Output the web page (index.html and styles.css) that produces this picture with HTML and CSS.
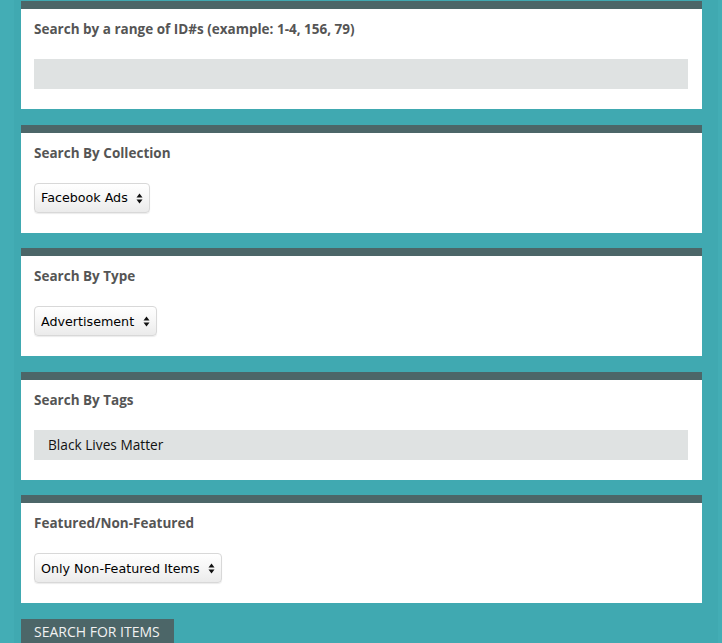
FILE: index.html
```html
<!DOCTYPE html>
<html>
<head>
<meta charset="utf-8">
<link rel="stylesheet" href="styles.css">
</head>
<body>
<div class="wrap">
  <div class="panel">
    <div class="label">Search by a range of ID#s (example: 1-4, 156, 79)</div>
    <input class="field" type="text" value="">
  </div>
  <div class="panel">
    <div class="label">Search By Collection</div>
    <span class="sel"><select><option>Facebook Ads</option></select><svg class="arr" width="7" height="11" viewBox="0 0 7 11"><path d="M3.5 0.5L6.5 4.5H0.5Z M3.5 10.5L6.5 6.5H0.5Z" fill="#111"/></svg></span>
  </div>
  <div class="panel">
    <div class="label">Search By Type</div>
    <span class="sel"><select><option>Advertisement</option></select><svg class="arr" width="7" height="11" viewBox="0 0 7 11"><path d="M3.5 0.5L6.5 4.5H0.5Z M3.5 10.5L6.5 6.5H0.5Z" fill="#111"/></svg></span>
  </div>
  <div class="panel">
    <div class="label">Search By Tags</div>
    <input class="field tags" type="text" value="Black Lives Matter">
  </div>
  <div class="panel">
    <div class="label">Featured/Non-Featured</div>
    <span class="sel"><select><option>Only Non-Featured Items</option></select><svg class="arr" width="7" height="11" viewBox="0 0 7 11"><path d="M3.5 0.5L6.5 4.5H0.5Z M3.5 10.5L6.5 6.5H0.5Z" fill="#111"/></svg></span>
  </div>
  <button class="submit">SEARCH FOR ITEMS</button>
</div>
</body>
</html>
```
FILE: styles.css
```css
html, body {
  margin: 0;
  padding: 0;
  background: #43adb5;
  height: 100%;
  overflow: hidden;
}
body {
  font-family: "Open Sans", "Noto Sans", sans-serif;
}
.wrap {
  margin-left: 14px;
  width: 704px;
  padding: 1px 16px 0 7px;
  box-sizing: border-box;
  background: #40a9b1;
  min-height: 100%;
  display: flex;
  flex-direction: column;
  align-items: flex-start;
}
.panel {
  align-self: stretch;
  background: #fff;
  border-top: 8px solid #4c6668;
  padding: 11px 14px 20px 13px;
  margin-bottom: 15.5px;
  display: flex;
  flex-direction: column;
  align-items: flex-start;
  box-sizing: border-box;
  height: 108px;
}
.label {
  font-size: 13.5px;
  font-weight: 700;
  color: #555;
  line-height: 18px;
  height: 18px;
  margin-bottom: 21px;
}
.field {
  align-self: stretch;
  height: 30px;
  box-sizing: border-box;
  border: none;
  outline: none;
  background: #dfe2e2;
  margin: 0;
  padding: 0 14px;
  font-family: "Open Sans", "Noto Sans", sans-serif;
  font-size: 13.7px;
  color: #111;
}
.sel {
  position: relative;
  display: inline-block;
  height: 30px;
}
.sel select {
  appearance: none;
  -webkit-appearance: none;
  height: 30px;
  margin: 0;
  padding: 0 21px 0 6px;
  border: 1px solid #d8d8d8;
  border-radius: 4px;
  background: linear-gradient(#ffffff, #f6f6f6 50%, #ebebeb);
  box-shadow: 0 1px 1px rgba(0,0,0,0.08);
  font-family: "DejaVu Sans", sans-serif;
  font-size: 12.7px;
  color: #000;
  outline: none;
}
.sel .arr {
  position: absolute;
  right: 7px;
  top: 10px;
}
.submit {
  margin: 0.5px 0 0;
  background: #4c6668;
  color: #f2f2f2;
  border: none;
  height: 30px;
  line-height: 20px;
  padding: 3px 14px 7px 13px;
  font-family: "Open Sans", "Noto Sans", sans-serif;
  font-size: 14px;
  cursor: pointer;
}
```
